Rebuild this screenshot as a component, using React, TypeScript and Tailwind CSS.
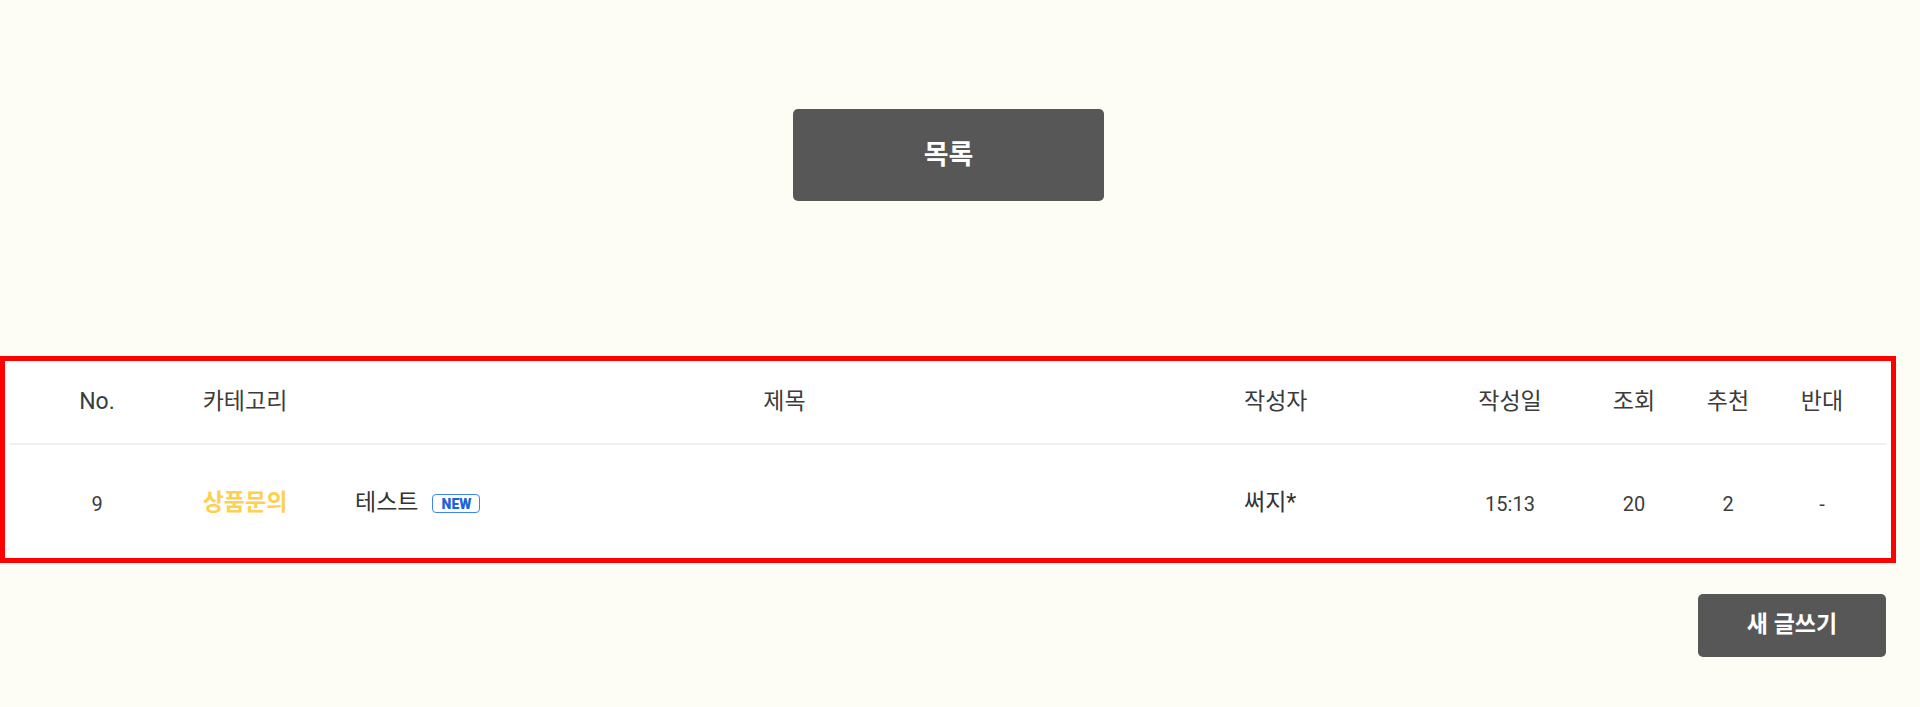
import React from "react";

const font = { fontFamily: '"Roboto", "Noto Sans CJK KR", "Liberation Sans", sans-serif' };

export default function App() {
  return (
    <div
      className="w-[1920px] min-h-[707px] bg-[#fefdf5] flex flex-col"
      style={font}
    >
      <div className="flex pt-[109px] pl-[793px]">
        <button className="w-[311px] h-[92px] rounded-[5px] bg-[#575757] text-white text-[27px] font-bold flex items-center justify-center">
          목록
        </button>
      </div>

      <div className="mt-[155px] w-[1896px] border-[5px] border-[#ff0000] bg-white">
        <div className="grid grid-cols-[184px_112px_927px_212px_140px_108px_80px_108px] h-[82px] items-center text-[23px] text-[#3c3c3c] pt-[1px]">
          <div className="text-center">No.</div>
          <div className="text-center">카테고리</div>
          <div className="text-center pl-[40px]">제목</div>
          <div className="pl-[16px]">작성자</div>
          <div className="text-center">작성일</div>
          <div className="text-center">조회</div>
          <div className="text-center">추천</div>
          <div className="text-center">반대</div>
        </div>
        <div className="ml-[5px] mr-[5px] h-[2px] bg-[#efefef]" />
        <div className="grid grid-cols-[184px_112px_927px_212px_140px_108px_80px_108px] h-[113px] items-center text-[20px] text-[#3c3c3c] pt-[4px]">
          <div className="text-center">9</div>
          <div className="text-center text-[#fdd052] font-semibold text-[23px]">상품문의</div>
          <div className="pl-[54px] flex items-center gap-[14px] text-[#333] text-[23px]">
            <span>테스트</span>
            <span className="inline-flex items-center justify-center w-[48px] h-[19px] rounded-[4px] border-[1.5px] border-[#3d86ee] text-[#1d63d8] text-[14px] font-black leading-none">
              NEW
            </span>
          </div>
          <div className="pl-[16px] text-[23px] text-[#333]">써지*</div>
          <div className="text-center">15:13</div>
          <div className="text-center">20</div>
          <div className="text-center">2</div>
          <div className="text-center">-</div>
        </div>
      </div>

      <div className="flex justify-end mt-[31px] pr-[34px]">
        <button className="w-[188px] h-[63px] rounded-[5px] bg-[#575757] text-white text-[23px] font-bold flex items-center justify-center">
          새 글쓰기
        </button>
      </div>
    </div>
  );
}
